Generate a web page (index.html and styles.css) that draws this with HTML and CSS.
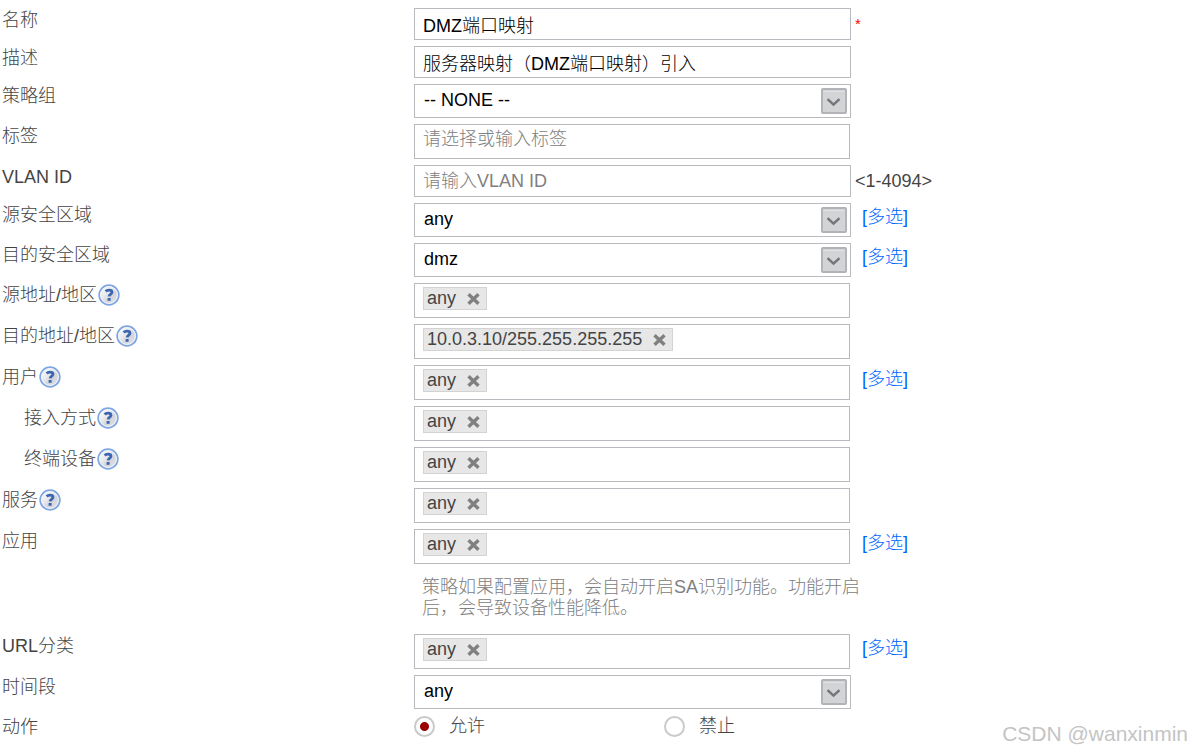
FILE: index.html
```
<!DOCTYPE html>
<html lang="zh-CN">
<head>
<meta charset="utf-8">
<meta name="viewport" content="width=device-width, initial-scale=1">
<title>DMZ端口映射</title>
<link rel="stylesheet" href="styles.css">
</head>
<body>
<svg class="sprite" aria-hidden="true">
  <defs>
    <linearGradient id="g-help" x1="0" y1="0" x2="1" y2="1">
      <stop offset="0" stop-color="#ffffff"/><stop offset=".4" stop-color="#e9eaed"/><stop offset=".6" stop-color="#d3d5da"/><stop offset="1" stop-color="#e4e6ea"/>
    </linearGradient>
    <symbol id="help" viewBox="0 0 22 22">
      <circle cx="11" cy="11" r="9.8" fill="url(#g-help)" stroke="#7ea6e4" stroke-width="1.8"/>
      <circle cx="11" cy="11" r="8.4" fill="none" stroke="#f3f6fc" stroke-width="1"/>
      <path d="M7.700 7.500C8.600 6.400 9.600 6.200 11 6.200c2 0 3 .7 3 2 0 1.800-2.800 1.900-2.900 4.200" fill="none" stroke="#3c66b0" stroke-width="2.800"/>
      <rect x="9.600" y="14" width="3" height="2.800" fill="#3c66b0"/>
    </symbol>
    <symbol id="arrow" viewBox="0 0 27 27">
      <rect x="1" y="1" width="25" height="25" rx="1" fill="#d3d4d6" stroke="#b2b3b9" stroke-width="2"/>
      <path d="M3 3.500h21" stroke="#e2e3e5"/>
      <path d="M6.800 11.500l6.200 5.700L19.200 11.500" fill="none" stroke="#757679" stroke-width="2.600"/>
    </symbol>
    <symbol id="cross" viewBox="0 0 13 12">
      <path d="M1.500 1.300l10 9.400M11.500 1.300l-10 9.400" stroke="#808080" stroke-width="3.400"/>
    </symbol>
  </defs>
</svg>
<form class="policy">
  <div class="row">
    <label class="name" for="f-name">名称</label>
    <div class="field"><input class="text" id="f-name" value="DMZ端口映射"></div>
    <span class="required">*</span>
  </div>
  <div class="row">
    <label class="name" for="f-desc">描述</label>
    <div class="field"><input class="text" id="f-desc" value="服务器映射（DMZ端口映射）引入"></div>
  </div>
  <div class="row">
    <label class="name" for="f-group">策略组</label>
    <div class="field combo"><select id="f-group"><option>-- NONE --</option></select><svg class="arrow"><use href="#arrow"/></svg></div>
  </div>
  <div class="row">
    <label class="name" for="f-tag">标签</label>
    <div class="field tags"><input id="f-tag" placeholder="请选择或输入标签"></div>
  </div>
  <div class="row">
    <label class="name" for="f-vlan">VLAN ID</label>
    <div class="field"><input class="text" id="f-vlan" placeholder="请输入VLAN ID"></div>
    <span class="range">&lt;1-4094&gt;</span>
  </div>
  <div class="row">
    <label class="name" for="f-src">源安全区域</label>
    <div class="field combo"><select id="f-src"><option>any</option></select><svg class="arrow"><use href="#arrow"/></svg></div>
    <a class="multi" href="#">[多选]</a>
  </div>
  <div class="row">
    <label class="name" for="f-dst">目的安全区域</label>
    <div class="field combo"><select id="f-dst"><option>dmz</option></select><svg class="arrow"><use href="#arrow"/></svg></div>
    <a class="multi" href="#">[多选]</a>
  </div>
  <div class="row">
    <label class="name" for="f-srcaddr">源地址/地区<svg class="help"><use href="#help"/></svg></label>
    <div class="field tags"><span class="chip">any<button type="button" aria-label="移除"><svg><use href="#cross"/></svg></button></span><input id="f-srcaddr"></div>
  </div>
  <div class="row">
    <label class="name" for="f-dstaddr">目的地址/地区<svg class="help"><use href="#help"/></svg></label>
    <div class="field tags"><span class="chip">10.0.3.10/255.255.255.255<button type="button" aria-label="移除"><svg><use href="#cross"/></svg></button></span><input id="f-dstaddr"></div>
  </div>
  <div class="row">
    <label class="name" for="f-user">用户<svg class="help"><use href="#help"/></svg></label>
    <div class="field tags"><span class="chip">any<button type="button" aria-label="移除"><svg><use href="#cross"/></svg></button></span><input id="f-user"></div>
    <a class="multi" href="#">[多选]</a>
  </div>
  <div class="row">
    <label class="name sub" for="f-access">接入方式<svg class="help"><use href="#help"/></svg></label>
    <div class="field tags"><span class="chip">any<button type="button" aria-label="移除"><svg><use href="#cross"/></svg></button></span><input id="f-access"></div>
  </div>
  <div class="row">
    <label class="name sub" for="f-device">终端设备<svg class="help"><use href="#help"/></svg></label>
    <div class="field tags"><span class="chip">any<button type="button" aria-label="移除"><svg><use href="#cross"/></svg></button></span><input id="f-device"></div>
  </div>
  <div class="row">
    <label class="name" for="f-service">服务<svg class="help"><use href="#help"/></svg></label>
    <div class="field tags"><span class="chip">any<button type="button" aria-label="移除"><svg><use href="#cross"/></svg></button></span><input id="f-service"></div>
  </div>
  <div class="row">
    <label class="name" for="f-app">应用</label>
    <div class="field tags"><span class="chip">any<button type="button" aria-label="移除"><svg><use href="#cross"/></svg></button></span><input id="f-app"></div>
    <a class="multi" href="#">[多选]</a>
  </div>
  <div class="row">
    <p class="note">策略如果配置应用，会自动开启SA识别功能。功能开启后，会导致设备性能降低。</p>
  </div>
  <div class="row">
    <label class="name" for="f-url">URL分类</label>
    <div class="field tags"><span class="chip">any<button type="button" aria-label="移除"><svg><use href="#cross"/></svg></button></span><input id="f-url"></div>
    <a class="multi" href="#">[多选]</a>
  </div>
  <div class="row">
    <label class="name" for="f-time">时间段</label>
    <div class="field combo"><select id="f-time"><option>any</option></select><svg class="arrow"><use href="#arrow"/></svg></div>
  </div>
  <div class="row" role="radiogroup" aria-labelledby="l-action">
    <span class="name" id="l-action">动作</span>
    <div class="choices">
      <label><input type="radio" name="action" checked>允许</label>
      <label><input type="radio" name="action">禁止</label>
    </div>
  </div>
</form>
<div class="watermark">CSDN @wanxinmin</div>
</body>
</html>
```
FILE: styles.css
```
* { box-sizing: border-box; }

body {
  margin: 0;
  background: #fff;
  color: #444;
  font: 300 18px/22px "Liberation Sans", "Noto Sans CJK SC", sans-serif;
}

input, select, button {
  font: inherit;
  color: #000;
}

.sprite { position: absolute; width: 0; height: 0; }

.policy {
  display: flex;
  flex-direction: column;
  gap: 6px;
  padding-top: 8px;
}

.row {
  display: grid;
  grid-template-columns: minmax(0, 414fr) minmax(0, 437fr) minmax(0, 341fr);
  align-items: start;
}

.name {
  display: flex;
  align-items: center;
  padding: 1px 0 0 2px;
}
.name.sub { padding-left: 24px; }

.help { width: 22px; height: 22px; margin-left: 1px; }

.text {
  display: block;
  width: 100%;
  height: 32px;
  padding: 0 8px;
  border: 1px solid #b9b9c0;
  background: #fff;
}

input { outline: 0; }
input::placeholder { color: #808080; opacity: 1; }

.combo { position: relative; }
.combo select {
  display: block;
  width: 100%;
  height: 34px;
  padding: 0 32px 2px 9px;
  border: 1px solid #b9b9c0;
  border-radius: 0;
  background: #fff;
  appearance: none;
}
.arrow {
  position: absolute;
  top: 4px;
  right: 4px;
  width: 26px;
  height: 26px;
  pointer-events: none;
}

.tags {
  display: flex;
  align-items: flex-start;
  height: 35px;
  margin-right: 1px;
  padding: 3px 8px;
  border: 1px solid #b9b9c0;
}
.tags > input {
  flex: 1;
  min-width: 0;
  height: 22px;
  padding: 0;
  border: 0;
  background: none;
}

.chip {
  display: flex;
  align-items: flex-start;
  height: 23px;
  padding: 0 6px 0 3px;
  border: 1px solid #d3d3d3;
  background: #e7e7e7;
  color: #444;
  line-height: 20px;
}
.chip button {
  display: flex;
  margin: 5px 0 0 11px;
  padding: 0;
  border: 0;
  background: none;
}
.chip svg { width: 13px; height: 12px; }

.required {
  padding: 5px 4px;
  color: #f00;
  font-size: 15px;
}
.range { padding: 5px 4px; }
.multi {
  padding: 3px 11px;
  color: #06f;
  text-decoration: none;
}

.note {
  grid-column: 2 / 4;
  max-width: 456px;
  margin: 0;
  padding: 7px 8px 9px;
  color: #808080;
  line-height: 21px;
}

.choices {
  display: flex;
  grid-column: 2 / 4;
}
.choices label {
  display: flex;
  align-items: center;
  gap: 14px;
  width: 250px;
}
.choices input {
  appearance: none;
  width: 21px;
  height: 21px;
  margin: 0;
  border: 2px solid #cacaca;
  border-radius: 50%;
  background: #fff;
}
.choices input:checked {
  background: radial-gradient(circle, #900 4px, #fff 5px);
}

.watermark {
  position: absolute;
  right: 4px;
  bottom: 8px;
  color: #c4c4c4;
  font-size: 21px;
  line-height: 24px;
}
```
